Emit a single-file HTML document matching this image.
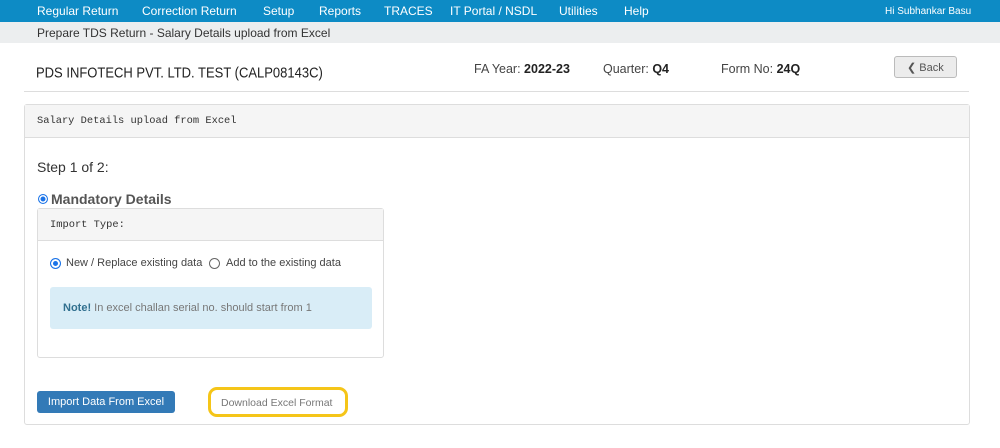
<!DOCTYPE html>
<html><head><style>
*{margin:0;padding:0;box-sizing:border-box}
body{width:1000px;height:448px;background:#fff;font-family:"Liberation Sans",sans-serif;position:relative;overflow:hidden;color:#333}
.a{position:absolute;white-space:nowrap}
.nav{left:0;top:0;width:1000px;height:22px;background:#0d8bc5}
.nav span{position:absolute;top:4px;color:#fff;font-size:12px}
.mono{font-family:"Liberation Mono",monospace}
</style></head><body>
<div class="a nav">
<span style="left:37px">Regular Return</span>
<span style="left:142px">Correction Return</span>
<span style="left:263px">Setup</span>
<span style="left:319px">Reports</span>
<span style="left:384px">TRACES</span>
<span style="left:450px">IT Portal / NSDL</span>
<span style="left:559px">Utilities</span>
<span style="left:624px">Help</span>
<span style="left:885px;top:6px;font-size:10px">Hi Subhankar Basu</span>
</div>
<div class="a" style="left:0;top:22px;width:1000px;height:21px;background:#eceeef"></div>
<div class="a" style="left:37px;top:26px;font-size:12px;color:#333">Prepare TDS Return - Salary Details upload from Excel</div>
<div class="a" style="left:36px;top:64px;font-size:13px;color:#222;transform:scaleY(1.12);transform-origin:left top">PDS INFOTECH PVT. LTD. TEST (CALP08143C)</div>
<div class="a" style="left:474px;top:62px;font-size:12.5px;color:#444">FA Year: <b style="color:#222">2022-23</b></div>
<div class="a" style="left:603px;top:62px;font-size:12.5px;color:#444">Quarter: <b style="color:#222">Q4</b></div>
<div class="a" style="left:721px;top:62px;font-size:12.5px;color:#444">Form No: <b style="color:#222">24Q</b></div>
<div class="a" style="left:894px;top:56px;width:63px;height:22px;border:1px solid #bbb;border-radius:3px;background:#ececec;font-size:11px;color:#555;padding:4px 0 0 12px">&#10094; Back</div>
<div class="a" style="left:24px;top:91px;width:945px;height:1px;background:#ddd"></div>
<div class="a" style="left:24px;top:104px;width:946px;height:321px;border:1px solid #ddd;border-radius:3px"></div>
<div class="a" style="left:25px;top:105px;width:944px;height:33px;background:#f5f5f5;border-bottom:1px solid #ddd"></div>
<div class="a mono" style="left:37px;top:115px;font-size:10.4px;color:#333">Salary Details upload from Excel</div>
<div class="a" style="left:37px;top:159px;font-size:14px;color:#333">Step 1 of 2:</div>
<div class="a" style="left:38px;top:194px;width:10px;height:10px;border-radius:50%;border:1px solid #1a73e8;background:#1a73e8;box-shadow:inset 0 0 0 1.5px #fff"></div>
<div class="a" style="left:51px;top:191px;font-size:14px;font-weight:bold;color:#555">Mandatory Details</div>
<div class="a" style="left:37px;top:208px;width:347px;height:150px;border:1px solid #ddd;border-radius:3px"></div>
<div class="a" style="left:38px;top:209px;width:345px;height:32px;background:#f5f5f5;border-bottom:1px solid #ddd"></div>
<div class="a mono" style="left:50px;top:219px;font-size:10.4px;color:#333">Import Type:</div>
<div class="a" style="left:50px;top:258px;width:11px;height:11px;border-radius:50%;border:1px solid #1a73e8;background:#1a73e8;box-shadow:inset 0 0 0 2px #fff"></div>
<div class="a" style="left:66px;top:257px;font-size:11px;color:#444">New / Replace existing data</div>
<div class="a" style="left:209px;top:258px;width:11px;height:11px;border-radius:50%;border:1px solid #666"></div>
<div class="a" style="left:226px;top:257px;font-size:11px;color:#444">Add to the existing data</div>
<div class="a" style="left:50px;top:287px;width:322px;height:42px;background:#d9edf7;border-radius:3px"></div>
<div class="a" style="left:63px;top:302px;font-size:11px;color:#777"><b style="color:#31708f">Note!</b> In excel challan serial no. should start from 1</div>
<div class="a" style="left:37px;top:391px;width:138px;height:22px;background:#337ab7;border-radius:3px;color:#fff;font-size:11px;text-align:center;line-height:22px">Import Data From Excel</div>
<div class="a" style="left:208px;top:387px;width:140px;height:30px;border:3px solid #f5c518;border-radius:9px"></div>
<div class="a" style="left:221px;top:397px;font-size:10.5px;color:#777">Download Excel Format</div>
</body></html>
